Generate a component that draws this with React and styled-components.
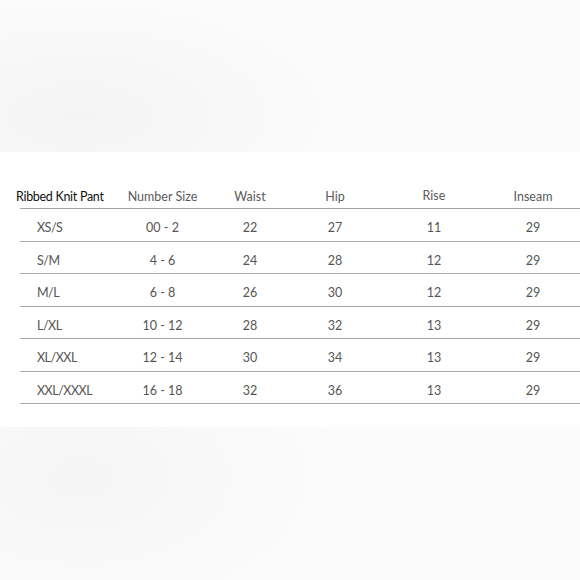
import React from 'react'
import styled, { createGlobalStyle } from 'styled-components'

const GlobalStyle = createGlobalStyle`
  html, body {
    margin: 0;
    padding: 0;
    background: #ffffff;
  }
  body {
    font-family: Lato, "Open Sans", sans-serif;
  }
`

const columns = ['Number Size', 'Waist', 'Hip', 'Rise', 'Inseam']

const rows = [
  ['XS/S', '00 - 2', '22', '27', '11', '29'],
  ['S/M', '4 - 6', '24', '28', '12', '29'],
  ['M/L', '6 - 8', '26', '30', '12', '29'],
  ['L/XL', '10 - 12', '28', '32', '13', '29'],
  ['XL/XXL', '12 - 14', '30', '34', '13', '29'],
  ['XXL/XXXL', '16 - 18', '32', '36', '13', '29'],
]

const SizeChart = () => (
  <Page>
    <GlobalStyle />
    <Band />
    <Chart>
      <HeaderRow>
        <ProductName>Ribbed Knit Pant</ProductName>
        {columns.map((c) => (
          <HeaderCell key={c} raised={c === 'Rise'}>
            {c}
          </HeaderCell>
        ))}
      </HeaderRow>
      {rows.map((r) => (
        <Row key={r[0]}>
          <SizeLabel>{r[0]}</SizeLabel>
          {r.slice(1).map((v, i) => (
            <Cell key={i}>{v}</Cell>
          ))}
        </Row>
      ))}
    </Chart>
    <Band bottom />
  </Page>
)

const Page = styled.div`
  width: 580px;
  height: 580px;
  display: flex;
  flex-direction: column;
  overflow: hidden;
`

const Band = styled.div`
  height: ${(props) => (props.bottom ? 'auto' : '152px')};
  flex: ${(props) => (props.bottom ? '1' : '0 0 auto')};
  background: ${(props) =>
    props.bottom
      ? 'radial-gradient(ellipse 260px 150px at 80px 50px, #f5f5f5 0%, #f9f9f9 60%, #fbfbfb 100%)'
      : 'radial-gradient(ellipse 260px 120px at 80px 115px, #f4f4f4 0%, #f8f8f8 60%, #fbfbfb 100%)'};
`

const Chart = styled.div`
  background: #ffffff;
  padding: 28px 0 23px 20px;
`

const grid = `
  display: grid;
  grid-template-columns: 100px 85px 90px 80px 118px 80px;
  align-items: center;
`

const HeaderRow = styled.div`
  ${grid}
  height: 29px;
  box-sizing: border-box;
  border-bottom: 1px solid #a3a3a3;
  padding-top: 5px;
`

const Row = styled.div`
  ${grid}
  height: 32.5px;
  box-sizing: border-box;
  border-bottom: 1px solid #a8a8a8;
  padding-top: 6px;
`

const ProductName = styled.div`
  margin-left: -4px;
  font-size: 12.5px;
  letter-spacing: -0.3px;
  font-weight: 400;
  color: #111111;
  white-space: nowrap;
`

const HeaderCell = styled.div`
  text-align: center;
  font-size: 12.5px;
  font-weight: 400;
  color: #5a5a5a;
  white-space: nowrap;
  margin-top: ${(props) => (props.raised ? '-3px' : '0')};
`

const SizeLabel = styled.div`
  padding-left: 17px;
  font-size: 12.5px;
  letter-spacing: -0.5px;
  font-weight: 400;
  color: #555555;
  white-space: nowrap;
`

const Cell = styled.div`
  text-align: center;
  font-size: 12.5px;
  font-weight: 400;
  color: #555555;
`

export default SizeChart
